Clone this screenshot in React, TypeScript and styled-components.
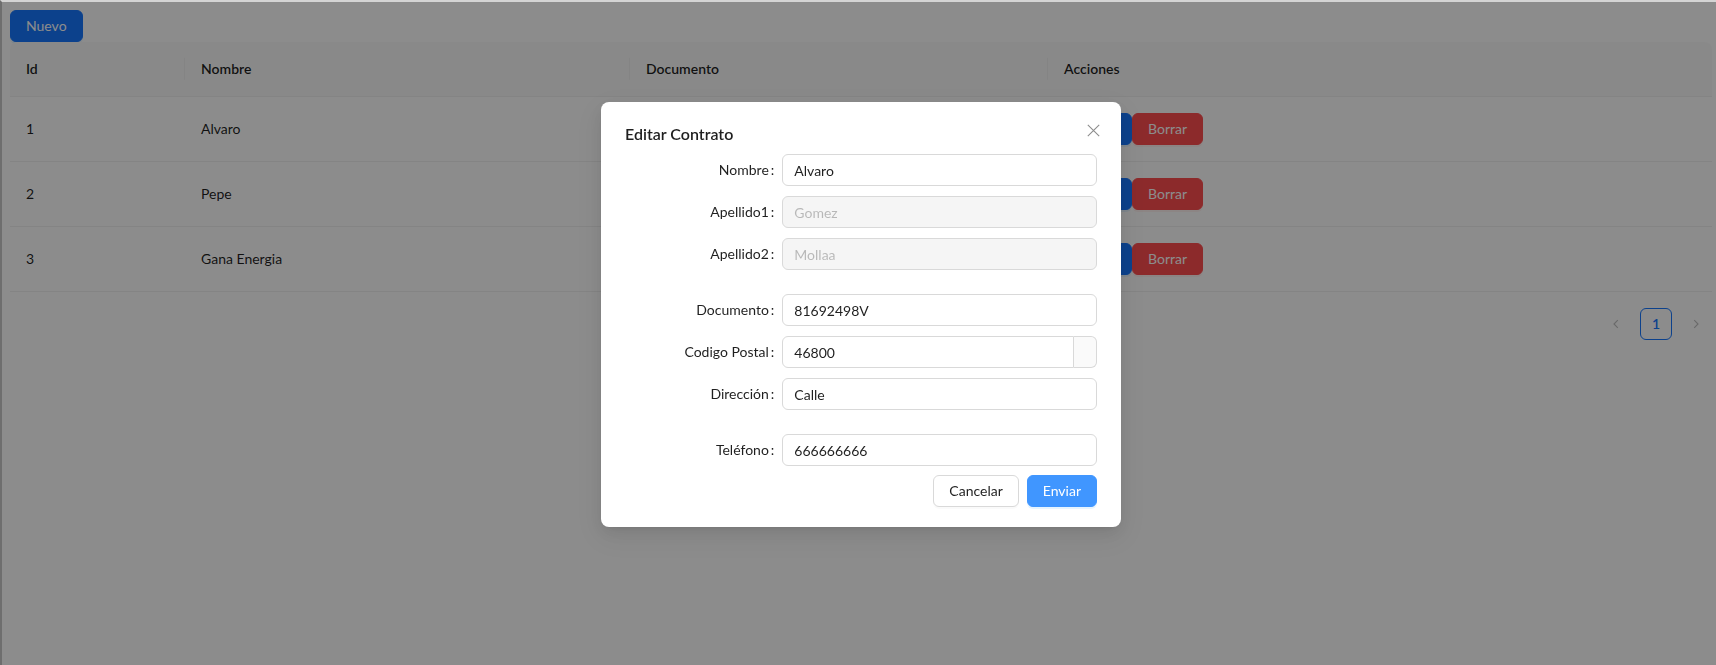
import React from "react";
import styled, { createGlobalStyle } from "styled-components";

const GlobalStyle = createGlobalStyle`
  html, body { margin: 0; padding: 0; background: #ffffff; overflow: hidden; }
  body {
    font-family: Lato, "Segoe UI", "Noto Sans", sans-serif;
    font-size: 14px;
    line-height: 1.5714;
    color: rgba(0, 0, 0, 0.88);
  }
  *, *::before, *::after { box-sizing: border-box; }
`;

const Page = styled.div`
  width: 1716px;
  height: 665px;
  border-top: 2px solid #d4d4d4;
  border-left: 2px solid #6e6e6e;
  padding: 8px 4px 8px 8px;
`;

const Button = styled.button<{ $variant?: "primary" | "danger" | "default" | "hover" }>`
  display: inline-flex;
  align-items: center;
  justify-content: center;
  height: 32px;
  padding: 4px 15px;
  border-radius: 6px;
  font-family: inherit;
  font-size: 14px;
  line-height: 1.5714;
  cursor: pointer;
  white-space: nowrap;
  border: 1px solid
    ${(p) =>
      p.$variant === "primary"
        ? "#1677ff"
        : p.$variant === "hover"
        ? "#4096ff"
        : p.$variant === "danger"
        ? "#ff4d4f"
        : "#d9d9d9"};
  background: ${(p) =>
    p.$variant === "primary"
      ? "#1677ff"
      : p.$variant === "hover"
      ? "#4096ff"
      : p.$variant === "danger"
      ? "#ff4d4f"
      : "#ffffff"};
  color: ${(p) => (p.$variant && p.$variant !== "default" ? "#ffffff" : "rgba(0,0,0,0.88)")};
  box-shadow: ${(p) =>
    p.$variant === "danger"
      ? "0 2px 0 rgba(255,38,5,0.06)"
      : p.$variant === "primary" || p.$variant === "hover"
      ? "0 2px 0 rgba(5,145,255,0.1)"
      : "0 2px 0 rgba(0,0,0,0.02)"};
`;

const Table = styled.table`
  width: 100%;
  border-collapse: separate;
  border-spacing: 0;
  table-layout: fixed;
`;

const HeadCell = styled.th<{ $width?: number }>`
  position: relative;
  width: ${(p) => (p.$width ? `${p.$width}px` : "auto")};
  padding: 16px;
  text-align: left;
  font-weight: 600;
  background: #fafafa;
  border-bottom: 1px solid #f0f0f0;
  &:first-child { border-top-left-radius: 8px; }
  &:last-child { border-top-right-radius: 8px; }
  &:not(:last-child)::before {
    content: "";
    position: absolute;
    top: 50%;
    right: 0;
    width: 1px;
    height: 1.6em;
    transform: translateY(-50%);
    background: #f0f0f0;
  }
`;

const Cell = styled.td`
  padding: 16px;
  height: 65px;
  border-bottom: 1px solid #f0f0f0;
  vertical-align: middle;
`;

const Actions = styled.div`
  display: flex;
`;

const Pagination = styled.ul`
  display: flex;
  justify-content: flex-end;
  gap: 8px;
  list-style: none;
  margin: 16px 0;
  padding: 0;
`;

const PageItem = styled.li<{ $active?: boolean }>`
  width: 32px;
  height: 32px;
  display: flex;
  align-items: center;
  justify-content: center;
  border-radius: 6px;
  border: 1px solid ${(p) => (p.$active ? "#1677ff" : "transparent")};
  background: ${(p) => (p.$active ? "#ffffff" : "transparent")};
  color: ${(p) => (p.$active ? "#1677ff" : "rgba(0,0,0,0.25)")};
  font-weight: ${(p) => (p.$active ? 600 : 400)};
`;

const Overlay = styled.div`
  position: fixed;
  top: 2px;
  left: 2px;
  right: 0;
  bottom: 0;
  background: rgba(0, 0, 0, 0.45);
`;

const ModalWrap = styled.div`
  position: fixed;
  top: 2px;
  left: 2px;
  right: 0;
  bottom: 0;
  display: flex;
  justify-content: center;
  align-items: flex-start;
  padding-top: 100px;
  padding-left: 4px;
`;

const ModalBox = styled.div`
  position: relative;
  width: 520px;
  background: #ffffff;
  border-radius: 8px;
  padding: 20px 24px;
  box-shadow: 0 6px 16px 0 rgba(0, 0, 0, 0.08), 0 3px 6px -4px rgba(0, 0, 0, 0.12),
    0 9px 28px 8px rgba(0, 0, 0, 0.05);
`;

const ModalTitle = styled.div`
  font-size: 16px;
  line-height: 24px;
  font-weight: 600;
  margin-bottom: 8px;
`;

const CloseButton = styled.button`
  position: absolute;
  top: 17px;
  right: 17px;
  width: 22px;
  height: 22px;
  padding: 0;
  border: 0;
  background: transparent;
  display: flex;
  align-items: center;
  justify-content: center;
  color: rgba(0, 0, 0, 0.45);
`;

const Form = styled.form`
  margin: 0;
`;

const FormItem = styled.div<{ $gap: number }>`
  display: grid;
  grid-template-columns: 1fr 2fr;
  align-items: center;
  height: 32px;
  margin-bottom: ${(p) => p.$gap}px;
`;

const Label = styled.label`
  display: flex;
  justify-content: flex-end;
  align-items: center;
  white-space: nowrap;
  &::after {
    content: ":";
    margin: 0 8px 0 2px;
  }
`;

const InputGroup = styled.div`
  display: flex;
  width: 100%;
`;

const Input = styled.input<{ $hasAddon?: boolean }>`
  flex: 1;
  min-width: 0;
  width: 100%;
  height: 32px;
  padding: 4px 11px;
  font-family: inherit;
  font-size: 14px;
  line-height: 1.5714;
  color: rgba(0, 0, 0, 0.88);
  background: #ffffff;
  border: 1px solid #d9d9d9;
  border-radius: ${(p) => (p.$hasAddon ? "6px 0 0 6px" : "6px")};
  outline: none;
  &:disabled {
    background: rgba(0, 0, 0, 0.04);
    color: rgba(0, 0, 0, 0.25);
  }
`;

const Addon = styled.span`
  width: 23px;
  height: 32px;
  background: rgba(0, 0, 0, 0.02);
  border: 1px solid #d9d9d9;
  border-left: 0;
  border-radius: 0 6px 6px 0;
`;

const Footer = styled.div`
  display: flex;
  justify-content: flex-end;
  gap: 8px;
  margin-top: 9px;
`;

const rows = [
  { id: 1, nombre: "Alvaro", documento: "81692498V" },
  { id: 2, nombre: "Pepe", documento: "12345678Z" },
  { id: 3, nombre: "Gana Energia", documento: "B12345678" },
];

type Field = { label: string; value: string; disabled?: boolean; addon?: boolean; gap: number };

const fields: Field[] = [
  { label: "Nombre", value: "Alvaro", gap: 10 },
  { label: "Apellido1", value: "Gomez", disabled: true, gap: 10 },
  { label: "Apellido2", value: "Mollaa", disabled: true, gap: 24 },
  { label: "Documento", value: "81692498V", gap: 10 },
  { label: "Codigo Postal", value: "46800", addon: true, gap: 10 },
  { label: "Dirección", value: "Calle", gap: 24 },
  { label: "Teléfono", value: "666666666", gap: 0 },
];

const Chevron = ({ dir }: { dir: "left" | "right" }) => (
  <svg width="10" height="10" viewBox="0 0 10 10" fill="none">
    <path
      d={dir === "left" ? "M6.8 1.2 L3 5 L6.8 8.8" : "M3.2 1.2 L7 5 L3.2 8.8"}
      stroke="currentColor"
      strokeWidth="1.1"
    />
  </svg>
);

export default function App() {
  return (
    <>
      <GlobalStyle />
      <Page>
        <Button $variant="primary">Nuevo</Button>
        <Table>
          <thead>
            <tr>
              <HeadCell $width={175}>Id</HeadCell>
              <HeadCell $width={445}>Nombre</HeadCell>
              <HeadCell $width={418}>Documento</HeadCell>
              <HeadCell>Acciones</HeadCell>
            </tr>
          </thead>
          <tbody>
            {rows.map((r) => (
              <tr key={r.id}>
                <Cell>{r.id}</Cell>
                <Cell>{r.nombre}</Cell>
                <Cell>{r.documento}</Cell>
                <Cell>
                  <Actions>
                    <Button $variant="primary">Editar</Button>
                    <Button $variant="danger">Borrar</Button>
                  </Actions>
                </Cell>
              </tr>
            ))}
          </tbody>
        </Table>
        <Pagination>
          <PageItem>
            <Chevron dir="left" />
          </PageItem>
          <PageItem $active>1</PageItem>
          <PageItem>
            <Chevron dir="right" />
          </PageItem>
        </Pagination>
      </Page>
      <Overlay />
      <ModalWrap>
        <ModalBox>
          <CloseButton aria-label="Close">
            <svg width="13" height="13" viewBox="0 0 13 13" fill="none">
              <path d="M0.8 0.8 L12.2 12.2 M12.2 0.8 L0.8 12.2" stroke="currentColor" strokeWidth="1.1" />
            </svg>
          </CloseButton>
          <ModalTitle>Editar Contrato</ModalTitle>
          <Form>
            {fields.map((f) => (
              <FormItem key={f.label} $gap={f.gap}>
                <Label>{f.label}</Label>
                <InputGroup>
                  <Input
                    defaultValue={f.value}
                    disabled={f.disabled}
                    $hasAddon={f.addon}
                  />
                  {f.addon && <Addon />}
                </InputGroup>
              </FormItem>
            ))}
            <Footer>
              <Button type="button">Cancelar</Button>
              <Button type="button" $variant="hover">
                Enviar
              </Button>
            </Footer>
          </Form>
        </ModalBox>
      </ModalWrap>
    </>
  );
}
